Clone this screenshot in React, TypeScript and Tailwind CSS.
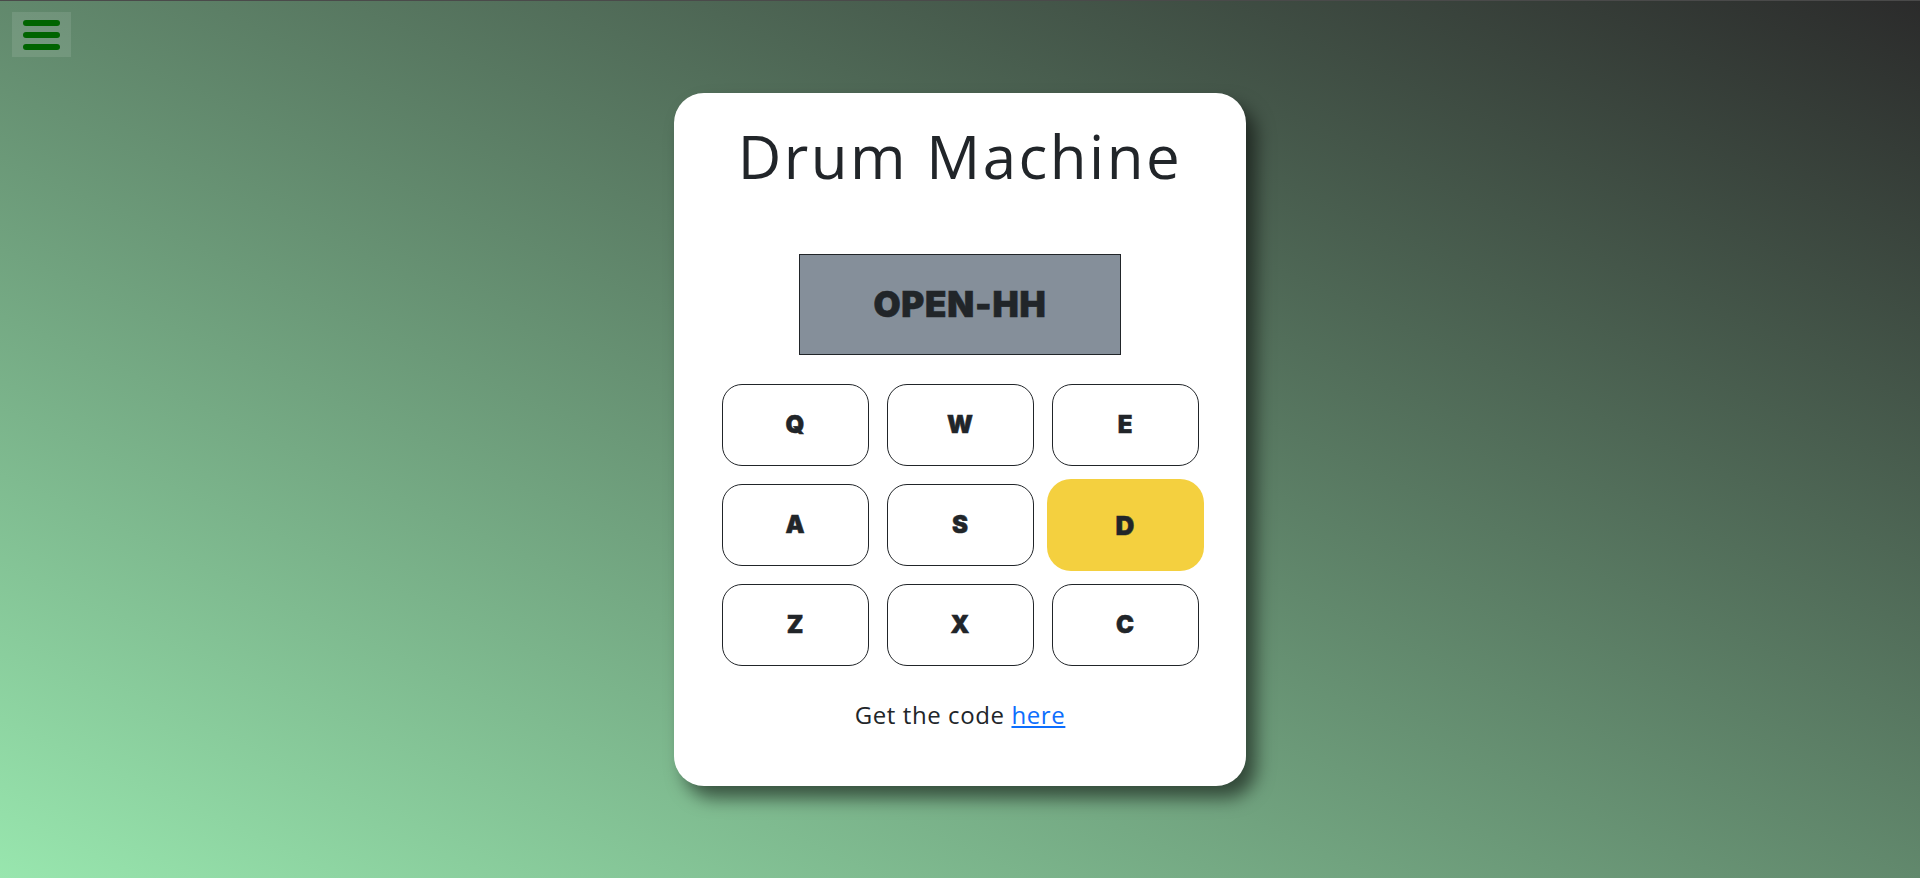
import { useState } from "react";

const keys = [
  { key: "Q", name: "HEATER-1" },
  { key: "W", name: "HEATER-2" },
  { key: "E", name: "HEATER-3" },
  { key: "A", name: "HEATER-4" },
  { key: "S", name: "CLAP" },
  { key: "D", name: "OPEN-HH" },
  { key: "Z", name: "KICK-N-HAT" },
  { key: "X", name: "KICK" },
  { key: "C", name: "CLOSED-HH" },
];

export default function App() {
  const [active, setActive] = useState("D");
  const current = keys.find((k) => k.key === active);

  return (
    <div className="relative min-h-[878px] w-full border-t border-[#4a4a4a] bg-[linear-gradient(to_top_right,#98e6ae,#2b2b2b)] font-['Open_Sans',sans-serif] text-[#212529]">
      <button className="absolute left-[12px] top-[11px] flex h-[45px] w-[59px] flex-col items-center justify-center gap-[6px] bg-white/10">
        <span className="h-[6px] w-[37px] rounded-full bg-[#006400]" />
        <span className="h-[6px] w-[37px] rounded-full bg-[#006400]" />
        <span className="h-[6px] w-[37px] rounded-full bg-[#006400]" />
      </button>

      <div className="flex justify-center pt-[92px]">
        <div className="flex h-[693px] w-[572px] flex-col items-center rounded-[30px] bg-white pt-[27px] shadow-[10px_12px_18px_rgba(0,0,0,0.55)]">
          <h1 className="text-[60px] leading-[1.2] font-normal tracking-[2.5px]">Drum Machine</h1>

          <div className="mt-[62px] flex h-[101px] w-[322px] items-center justify-center border border-[#212529] bg-[#858f9a]">
            <span className="font-['Inter',sans-serif] text-[35px] font-black tracking-[0.8px] [-webkit-text-stroke:0.6px_#212529]">
              {current?.name}
            </span>
          </div>

          <div className="mt-[29px] grid grid-cols-[repeat(3,147px)] gap-[18px]">
            {keys.map((k) =>
              k.key === active ? (
                <button
                  key={k.key}
                  onClick={() => setActive(k.key)}
                  className="-m-[5px] flex h-[92px] items-center justify-center rounded-[24px] bg-[#f4d03f] font-['Inter',sans-serif] text-[26px] font-black [-webkit-text-stroke:0.5px_#212529]"
                >
                  {k.key}
                </button>
              ) : (
                <button
                  key={k.key}
                  onClick={() => setActive(k.key)}
                  className="flex h-[82px] items-center justify-center rounded-[20px] border border-[#212529] bg-white font-['Inter',sans-serif] text-[24px] font-black [-webkit-text-stroke:0.5px_#212529]"
                >
                  {k.key}
                </button>
              )
            )}
          </div>

          <p className="mt-[31px] text-[24px] tracking-[0.6px]">
            Get the code{" "}
            <a href="#" className="text-[#0d6efd] underline">
              here
            </a>
          </p>
        </div>
      </div>
    </div>
  );
}
